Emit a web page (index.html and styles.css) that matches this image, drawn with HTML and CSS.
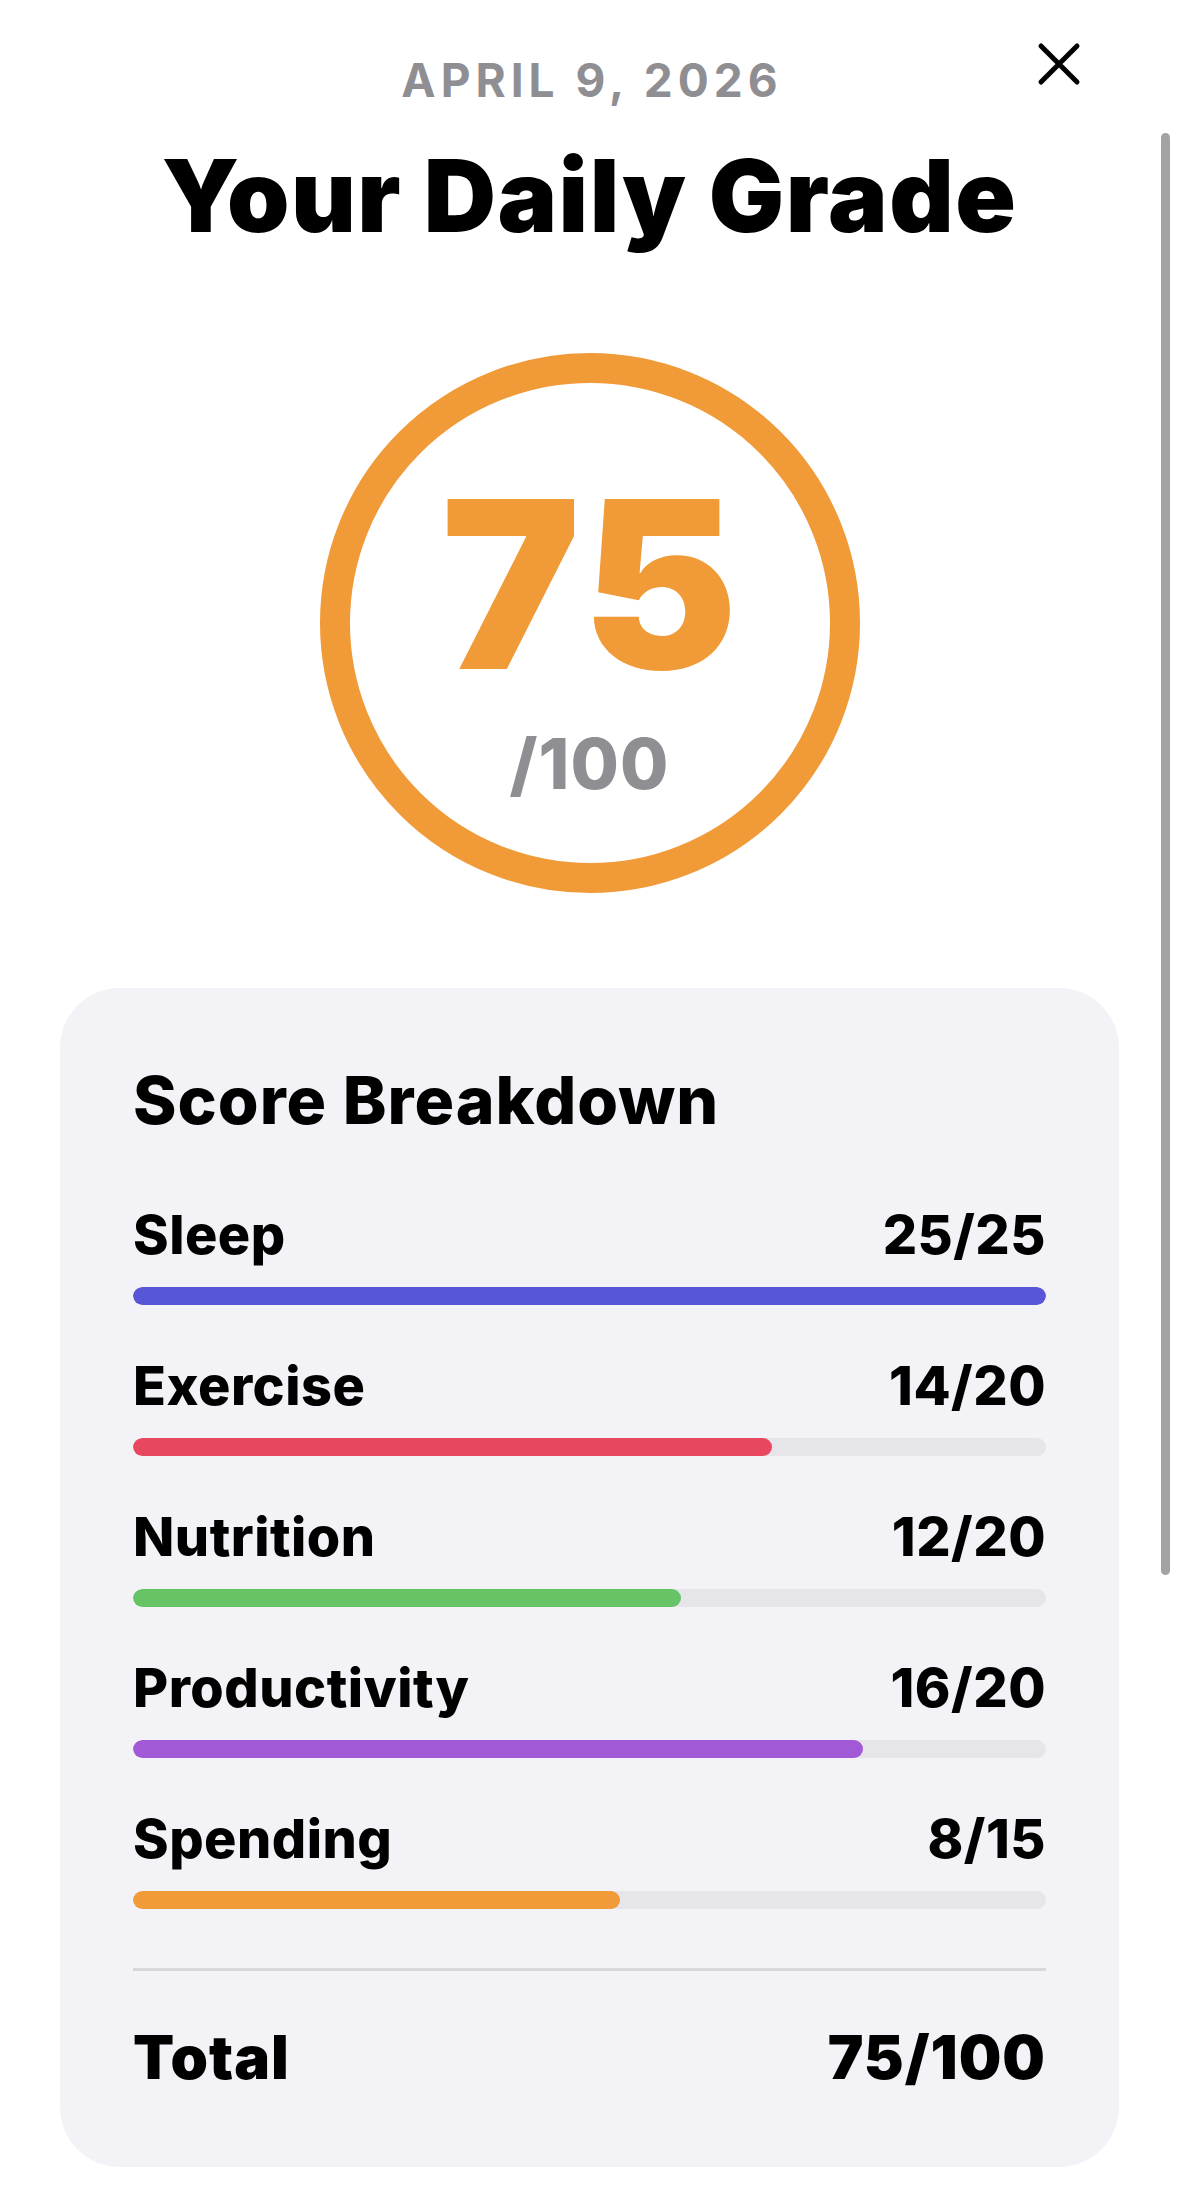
FILE: index.html
```html
<!DOCTYPE html>
<html lang="en">

<head>
  <meta charset="UTF-8" />
  <meta name="viewport" content="width=device-width, initial-scale=1.0" />
  <title>Your Daily Grade</title>
  <link rel="stylesheet" href="styles.css">
</head>

<body>
  <div class="sheet">
    <button class="close" aria-label="Close">
      <svg viewBox="0 0 40 40" width="40" height="40">
        <path d="M2 2 L38 38 M38 2 L2 38" stroke="#000" stroke-width="5" stroke-linecap="round" fill="none" />
      </svg>
    </button>

    <header class="top">
      <div class="date">APRIL 9, 2026</div>
      <h1>Your Daily Grade</h1>
    </header>

    <div class="ring">
      <div class="score">75</div>
      <div class="out-of">/100</div>
    </div>

    <section class="card">
      <h2>Score Breakdown</h2>

      <div class="row">
        <div class="row-head"><span>Sleep</span><span>25/25</span></div>
        <div class="track"><div class="fill sleep" style="width: 100%"></div></div>
      </div>

      <div class="row">
        <div class="row-head"><span>Exercise</span><span>14/20</span></div>
        <div class="track"><div class="fill exercise" style="width: 70%"></div></div>
      </div>

      <div class="row">
        <div class="row-head"><span>Nutrition</span><span>12/20</span></div>
        <div class="track"><div class="fill nutrition" style="width: 60%"></div></div>
      </div>

      <div class="row">
        <div class="row-head"><span>Productivity</span><span>16/20</span></div>
        <div class="track"><div class="fill productivity" style="width: 80%"></div></div>
      </div>

      <div class="row">
        <div class="row-head"><span>Spending</span><span>8/15</span></div>
        <div class="track"><div class="fill spending" style="width: 53.33%"></div></div>
      </div>

      <hr class="divider" />

      <div class="total"><span>Total</span><span>75/100</span></div>
    </section>
  </div>

  <div class="scroll-indicator"></div>
</body>

</html>
```

FILE: styles.css
```css
body {
  margin: 0;
  padding: 0;
  font-family: Inter, "Noto Sans", sans-serif;
  background: #fff;
  color: #000;
  overflow: hidden;
}

.sheet {
  position: relative;
  padding: 52px 60px 0;
}

.close {
  position: absolute;
  top: 44px;
  right: 100px;
  width: 40px;
  height: 40px;
  padding: 0;
  border: none;
  background: none;
}

.close svg {
  display: block;
  overflow: visible;
}

.top {
  text-align: center;
}

.date {
  font-size: 46px;
  font-weight: 700;
  letter-spacing: 5px;
  text-indent: 5px;
  color: #8e8e93;
  line-height: 56px;
}

h1 {
  margin: 27px 0 0;
  font-size: 100px;
  font-weight: 900;
  letter-spacing: 1.5px;
  line-height: 121px;
}

.ring {
  box-sizing: border-box;
  width: 540px;
  height: 540px;
  margin: 97px auto 0;
  border: 30px solid #f09a38;
  border-radius: 50%;
  padding-top: 24px;
  display: flex;
  flex-direction: column;
  align-items: center;
  justify-content: center;
}

.score {
  font-size: 234px;
  font-weight: 900;
  line-height: 240px;
  color: #f09a38;
  letter-spacing: 4px;
  text-indent: 4px;
}

.out-of {
  margin-top: 18px;
  font-size: 70px;
  font-weight: 800;
  line-height: 84px;
  color: #8e8e93;
  letter-spacing: 1px;
}

.card {
  margin-top: 95px;
  background: #f2f2f7;
  border-radius: 60px;
  padding: 72px 73px 74px;
}

h2 {
  margin: 0 0 63px;
  font-size: 66px;
  font-weight: 800;
  line-height: 80px;
  letter-spacing: 1px;
}

.row {
  margin-bottom: 49px;
}

.row-head {
  display: flex;
  justify-content: space-between;
  font-size: 54px;
  font-weight: 800;
  line-height: 64px;
  letter-spacing: 0.5px;
}

.track {
  margin-top: 20px;
  height: 18px;
  border-radius: 9px;
  background: #e5e5ea;
  overflow: hidden;
}

.fill {
  height: 100%;
  border-radius: 9px;
}

.sleep { background: #5856d6; }
.exercise { background: #e8475f; }
.nutrition { background: #66c466; }
.productivity { background: #a259d6; }
.spending { background: #f09a38; }

.divider {
  margin: 59px 0 0;
  height: 3px;
  border: none;
  background: #d6d6db;
}

.total {
  margin-top: 50px;
  display: flex;
  justify-content: space-between;
  font-size: 60px;
  font-weight: 900;
  line-height: 72px;
  letter-spacing: 1px;
}

.scroll-indicator {
  position: fixed;
  top: 133px;
  right: 9px;
  width: 9px;
  height: 1442px;
  border-radius: 5px;
  background: #a3a3a3;
}
```
